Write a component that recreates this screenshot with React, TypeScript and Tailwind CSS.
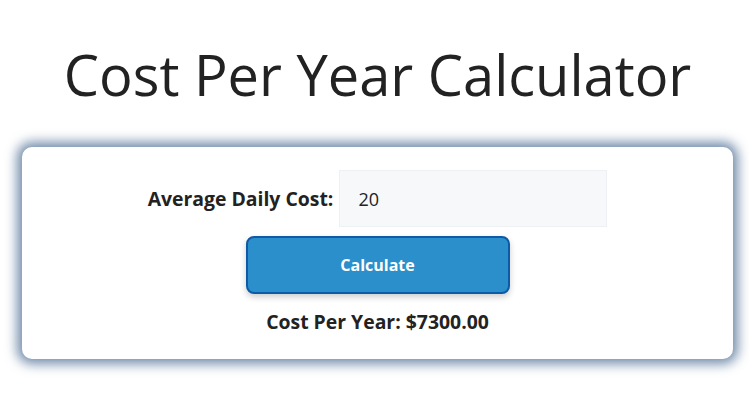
export default function App() {
  return (
    <div className="min-h-[404px] bg-white pl-[22px] pr-[16px] pt-[30px] font-['Open_Sans',sans-serif] text-[#222]">
      <h1 className="text-center text-[56px] leading-[88px] font-normal text-[#222]">Cost Per Year Calculator</h1>
      <div className="mt-[29px] rounded-[10px] bg-white py-[23px] shadow-[0_0_12px_5px_rgba(80,112,150,0.8)]">
        <div className="flex items-center justify-center gap-[6px]">
          <label className="text-[19.4px] font-bold">Average Daily Cost:</label>
          <input
            defaultValue="20"
            className="h-[57px] w-[268px] border border-[#eef0f3] bg-[#f7f8fa] px-[18px] text-[18px] text-[#222] outline-none"
          />
        </div>
        <div className="mt-[9px] flex justify-center">
          <button className="h-[58px] w-[264px] rounded-[8px] border-2 border-[#0d5aa7] bg-[#2b8fcb] text-[16px] font-bold text-white shadow-[0_3px_6px_rgba(0,0,0,0.2)]">
            Calculate
          </button>
        </div>
        <p className="mt-[14px] text-center text-[19.4px] font-bold leading-[28px]">Cost Per Year: $7300.00</p>
      </div>
    </div>
  );
}
